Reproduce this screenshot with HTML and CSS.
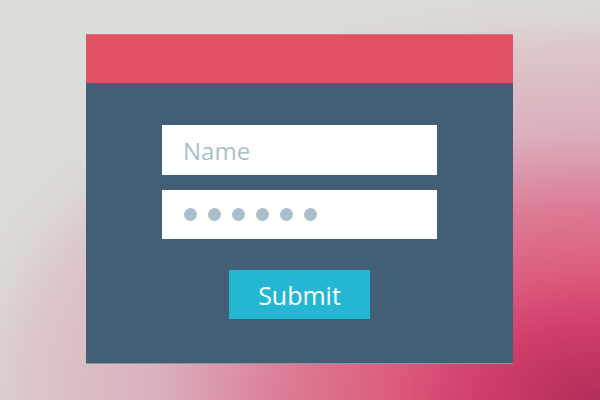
FILE: index.html
```html
<!DOCTYPE html>
<html lang="en">
<head>
  <meta charset="UTF-8" />
  <title>Login</title>
  <link rel="stylesheet" href="styles.css">
</head>
<body>
  <div class="card">
    <div class="card-header"></div>
    <form class="card-body">
      <div class="field">
        <span class="placeholder">Name</span>
      </div>
      <div class="field dots">
        <span class="dot"></span>
        <span class="dot"></span>
        <span class="dot"></span>
        <span class="dot"></span>
        <span class="dot"></span>
        <span class="dot"></span>
      </div>
      <button type="button" class="submit">Submit</button>
    </form>
  </div>
</body>
</html>
```

FILE: styles.css
```css
html, body {
  margin: 0;
  height: 100%;
}
/* Soft pink glow from the bottom right corner */
body {
  width: 600px;
  height: 400px;
  overflow: hidden;
  font-family: 'Open Sans', sans-serif;
  background: radial-gradient(ellipse 622px 380px at 100% 100%,
    #b02e58 0%, #d03f6a 20%, #dc5a7e 33%, #dc7a94 50%, #dbb0bd 71%,
    #dcc6c9 92%, #dcd6d3 100%, #dcddd8 108%);
  padding: 34px 0 0 86px;
  box-sizing: border-box;
}
.card {
  width: 427px;
  height: 330px;
  display: flex;
  flex-direction: column;
}
.card-header {
  height: 49px;
  background-color: #e05263;
  border-top: 1px solid #e56d7a;
  box-sizing: border-box;
}
.card-body {
  flex: 1;
  margin: 0;
  background-color: #435f75;
  border-bottom: 1px solid #8796a4;
  display: flex;
  flex-direction: column;
  align-items: center;
  padding-top: 42px;
  box-sizing: border-box;
}
.field {
  width: 275px;
  height: 50px;
  background-color: #ffffff;
  display: flex;
  align-items: center;
  padding-left: 21px;
  box-sizing: border-box;
}
.field + .field {
  margin-top: 15px;
  height: 49px;
}
.placeholder {
  font-size: 24px;
  color: #a9c0cb;
  line-height: 1;
  margin-top: 1px;
}
.dots {
  gap: 11px;
  padding-left: 22px;
}
.dot {
  width: 13px;
  height: 13px;
  border-radius: 50%;
  background-color: #a9c0cb;
}
.submit {
  margin-top: 31px;
  width: 141px;
  height: 49px;
  border: none;
  background-color: #23b7d3;
  color: #ffffff;
  font-family: 'Open Sans', sans-serif;
  font-size: 25px;
  padding: 0;
  cursor: pointer;
}
```
